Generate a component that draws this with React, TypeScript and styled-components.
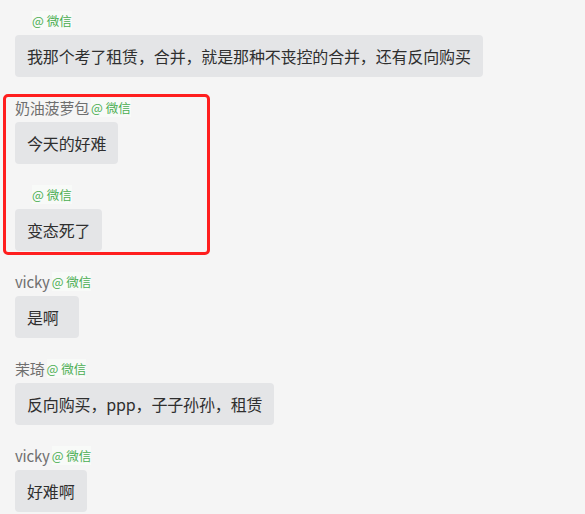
import React from 'react';
import styled, { createGlobalStyle } from 'styled-components';

const GlobalStyle = createGlobalStyle`
  html, body {
    margin: 0;
    padding: 0;
    background: #f5f5f5;
  }
  body {
    font-family: "Noto Sans CJK SC", "Noto Sans", sans-serif;
  }
`;

const Page = styled.div`
  min-height: 514px;
  box-sizing: border-box;
  padding: 10px 0 0 15px;
  border-left: 2px solid #fafafa;
  margin-left: -2px;
  display: flex;
  flex-direction: column;
  gap: 20px;
`;

const Group = styled.div`
  display: flex;
  flex-direction: column;
  align-items: flex-start;
  gap: 5px;
`;

const Highlight = styled.div`
  position: relative;
  display: flex;
  flex-direction: column;
  gap: 20px;

  &::after {
    content: '';
    position: absolute;
    top: -3px;
    left: -12px;
    width: 207px;
    bottom: -4px;
    box-sizing: border-box;
    border: 3px solid #ff1f1f;
    border-radius: 5px;
    pointer-events: none;
  }
`;

const NameLine = styled.div<{ $indent?: number }>`
  height: 20px;
  display: flex;
  align-items: center;
  padding-left: ${(p) => p.$indent ?? 0}px;
`;

const Name = styled.span`
  font-size: 15px;
  color: #6f6f6f;
  letter-spacing: -0.2px;
`;

const Tag = styled.span`
  font-size: 12.5px;
  color: #4aae52;
  margin-left: 2px;
  background: #f8faf8;
`;

const Bubble = styled.div`
  height: 42px;
  line-height: 42px;
  min-width: 40px;
  padding: 0 12px;
  background: #e4e5e7;
  border-radius: 4px;
  font-size: 16px;
  letter-spacing: -0.15px;
  color: #2f2f2f;
  white-space: nowrap;
`;

type Msg = { name?: string; text: string };

const Message: React.FC<Msg> = ({ name, text }) => (
  <Group>
    <NameLine $indent={name ? 0 : 15}>
      {name && <Name>{name}</Name>}
      <Tag>@ 微信</Tag>
    </NameLine>
    <Bubble>{text}</Bubble>
  </Group>
);

export default function App() {
  return (
    <>
      <GlobalStyle />
      <Page>
        <Message text="我那个考了租赁，合并，就是那种不丧控的合并，还有反向购买" />
        <Highlight>
          <Message name="奶油菠萝包" text="今天的好难" />
          <Message text="变态死了" />
        </Highlight>
        <Message name="vicky" text="是啊" />
        <Message name="茉琦" text="反向购买，ppp，子子孙孙，租赁" />
        <Message name="vicky" text="好难啊" />
      </Page>
    </>
  );
}
